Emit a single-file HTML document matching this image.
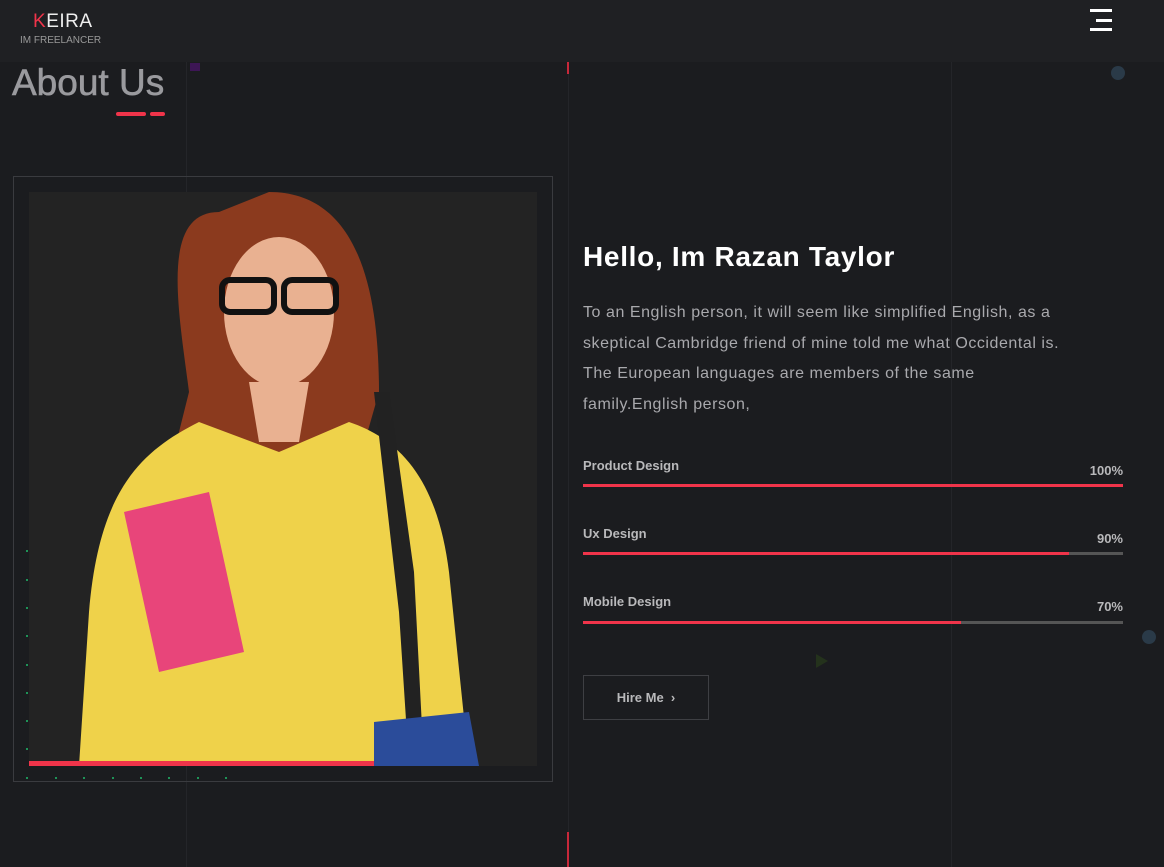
<!DOCTYPE html>
<html><head><meta charset="utf-8"><style>
*{margin:0;padding:0;box-sizing:border-box}
body{width:1164px;height:867px;background:#1b1c1f;font-family:"Liberation Sans",sans-serif;position:relative;overflow:hidden}
.hdr{position:absolute;left:0;top:0;width:1164px;height:62px;background:#1f2023}
.vl{position:absolute;top:62px;bottom:0;width:1px;background:#242529}
.abs{position:absolute}
.skill{position:absolute;left:583px;width:540px;color:#b9b9bb;font-weight:bold;font-size:13px}
.bar{position:absolute;left:0;width:540px;height:3px;background:#555}
.bar i{display:block;height:3px;background:#f0344a}
</style></head><body>
<div class="hdr"></div>
<div class="abs" style="left:33px;top:11px;color:#eee;font-size:19px;letter-spacing:0.5px"><span style="color:#f0344a">K</span>EIRA</div>
<div class="abs" style="left:20px;top:35px;color:#999;font-size:10px">IM FREELANCER</div>
<div class="abs" style="left:1090px;top:9px;width:22px;height:3px;background:#fff"></div>
<div class="abs" style="left:1096px;top:19px;width:16px;height:3px;background:#fff"></div>
<div class="abs" style="left:1090px;top:28px;width:22px;height:3px;background:#fff"></div>
<div class="vl" style="left:186px"></div><div class="vl" style="left:568px"></div><div class="vl" style="left:951px"></div>
<div class="abs" style="left:567px;top:62px;width:2px;height:12px;background:#c8283a"></div>
<div class="abs" style="left:567px;top:832px;width:2px;height:35px;background:#c8283a"></div>
<div class="abs" style="left:190px;top:63px;width:10px;height:8px;background:#3d1655"></div>
<div class="abs" style="left:1111px;top:66px;width:14px;height:14px;border-radius:50%;background:#2a3a48"></div>
<div class="abs" style="left:1142px;top:630px;width:14px;height:14px;border-radius:50%;background:#2a3a48"></div>
<div class="abs" style="left:12px;top:62px;color:#9a9a9e;font-size:37px;-webkit-text-stroke:0.6px #9a9a9e">About Us</div>
<div class="abs" style="left:116px;top:112px;width:30px;height:4px;background:#f0344a;border-radius:2px"></div>
<div class="abs" style="left:150px;top:112px;width:15px;height:4px;background:#f0344a;border-radius:2px"></div>
<div class="abs" style="left:13px;top:176px;width:540px;height:606px;border:1px solid #3a3b3f"></div>
<div class="abs" style="left:29px;top:192px;width:508px;height:574px;background:#232323;overflow:hidden">
<svg width="508" height="574" viewBox="0 0 508 574">
<path d="M190 20 C130 20 150 120 160 200 L140 280 L200 260 L330 270 L350 200 C350 100 330 0 240 0 Z" fill="#8b3a1e"/>
<path d="M50 574 L60 420 C70 300 110 260 170 230 L250 260 L320 230 C380 250 410 300 420 380 L440 574 Z" fill="#efd24a"/>
<ellipse cx="250" cy="120" rx="55" ry="75" fill="#e9b191"/>
<rect x="193" y="88" width="52" height="32" rx="8" fill="none" stroke="#111" stroke-width="6"/>
<rect x="255" y="88" width="52" height="32" rx="8" fill="none" stroke="#111" stroke-width="6"/>
<path d="M220 190 L280 190 L270 250 L230 250Z" fill="#e9b191"/>
<path d="M95 320 L180 300 L215 460 L130 480Z" fill="#e8457a"/>
<path d="M345 200 L370 420 L380 574 L395 574 L385 380 L360 200Z" fill="#222"/>
<path d="M345 530 L440 520 L450 574 L345 574Z" fill="#2b4c9a"/>
</svg></div>
<div class="abs" style="left:29px;top:761px;width:345px;height:5px;background:#f0344a"></div>
<div class="abs" style="left:583px;top:241px;color:#fff;font-size:28px;font-weight:bold;letter-spacing:0.7px">Hello, Im Razan Taylor</div>
<div class="abs" style="left:583px;top:298px;white-space:nowrap;color:#a9a9ad;font-size:16px;letter-spacing:0.55px;line-height:30.5px">To an English person, it will seem like simplified English, as a<br>skeptical Cambridge friend of mine told me what Occidental is.<br>The European languages are members of the same<br>family.English person,</div>
<div class="skill" style="top:458px">Product Design<span style="position:absolute;right:0;top:5px">100%</span><div class="bar" style="top:26px"><i style="width:100%"></i></div></div>
<div class="skill" style="top:526px">Ux Design<span style="position:absolute;right:0;top:5px">90%</span><div class="bar" style="top:26px"><i style="width:90%"></i></div></div>
<div class="skill" style="top:594px">Mobile Design<span style="position:absolute;right:0;top:5px">70%</span><div class="bar" style="top:27px"><i style="width:70%"></i></div></div>
<div class="abs" style="left:816px;top:654px;width:0;height:0;border-left:12px solid #24321c;border-top:7px solid transparent;border-bottom:7px solid transparent"></div>
<div class="abs" style="left:583px;top:675px;width:126px;height:45px;border:1px solid #3e3f43;color:#b9b9bb;font-size:13px;font-weight:bold;text-align:center;line-height:43px">Hire Me &nbsp;›</div>
<svg class="abs" style="left:22px;top:545px" width="215" height="240"><g fill="#1fb86a"><circle cx="5" cy="6" r="1"/><circle cx="5" cy="35" r="1"/><circle cx="5" cy="63" r="1"/><circle cx="5" cy="91" r="1"/><circle cx="5" cy="120" r="1"/><circle cx="5" cy="148" r="1"/><circle cx="5" cy="176" r="1"/><circle cx="5" cy="204" r="1"/><circle cx="5" cy="233" r="1"/><circle cx="34" cy="233" r="1"/><circle cx="62" cy="233" r="1"/><circle cx="91" cy="233" r="1"/><circle cx="119" cy="233" r="1"/><circle cx="147" cy="233" r="1"/><circle cx="176" cy="233" r="1"/><circle cx="204" cy="233" r="1"/></g></svg>
</body></html>
